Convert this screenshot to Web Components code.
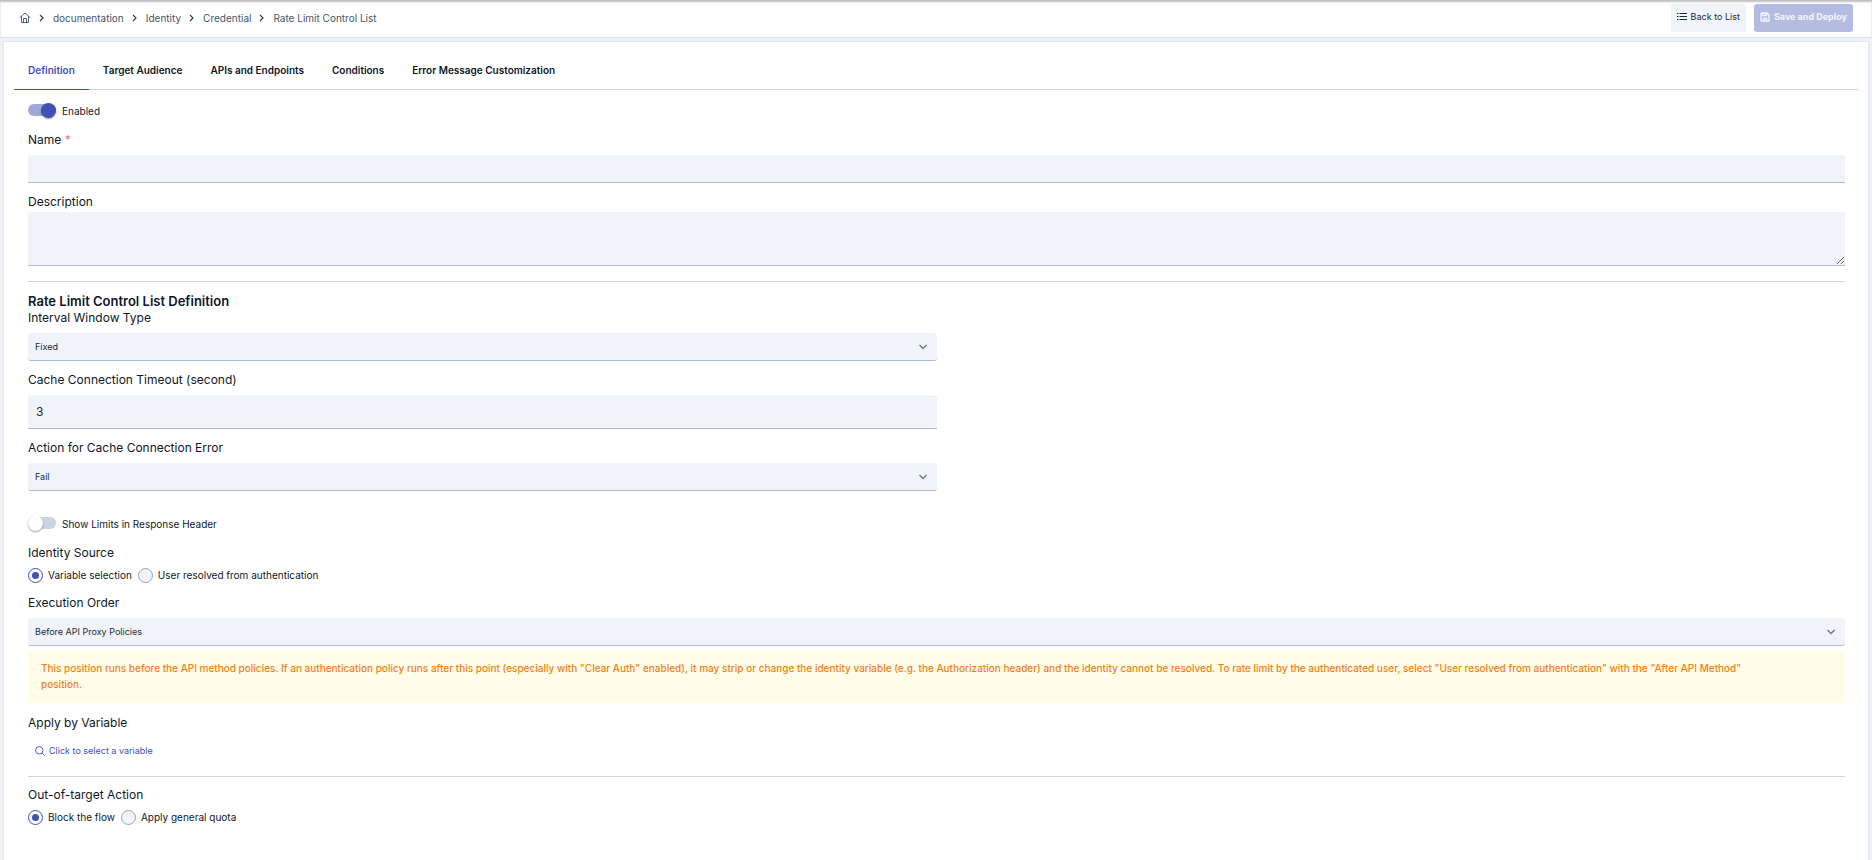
<!DOCTYPE html>
<html lang="en">
<head>
<meta charset="utf-8">
<meta name="viewport" content="width=device-width, initial-scale=1">
<title>Rate Limit Control List</title>
<style>
  :root {
    --primary: #3f51b5;
    --primary-soft: #9fa8da;
    --text: #0f172a;
    --muted: #475569;
    --field: #f0f4f9;
    --line: #cbd5e1;
    --field-line: #acbacb;
  }
  body {
    margin: 0;
    font-family: Inter, "Liberation Sans", sans-serif;
    font-size: 12px;
    line-height: 16px;
    color: var(--text);
    background: #eef1f6;
  }
</style>
</head>
<body>
<app-shell>
  <crumb-trail slot="trail" data-items="documentation|Identity|Credential|Rate Limit Control List"></crumb-trail>
  <action-button slot="actions" data-icon="list">Back to List</action-button>
  <action-button slot="actions" data-icon="save" data-variant="primary" disabled>Save and Deploy</action-button>

  <tab-bar data-items="Definition|Target Audience|APIs and Endpoints|Conditions|Error Message Customization"></tab-bar>

  <form-body>
    <toggle-switch data-label="Enabled" checked></toggle-switch>
    <text-field data-label="Name" required></text-field>
    <text-field class="area" data-label="Description" data-type="area"></text-field>
    <section-rule></section-rule>
    <section-title>Rate Limit Control List Definition</section-title>
    <select-field class="half" data-label="Interval Window Type" data-options="Fixed|Sliding"></select-field>
    <text-field class="half" data-label="Cache Connection Timeout (second)" data-type="number" data-value="3"></text-field>
    <select-field class="half last" data-label="Action for Cache Connection Error" data-options="Fail|Continue"></select-field>
    <toggle-switch data-label="Show Limits in Response Header"></toggle-switch>
    <radio-group data-label="Identity Source" data-options="Variable selection|User resolved from authentication"></radio-group>
    <select-field class="order" data-label="Execution Order" data-options="Before API Proxy Policies|After API Method"></select-field>
    <warning-note>This position runs before the API method policies. If an authentication policy runs after this point (especially with "Clear Auth" enabled), it may strip or change the identity variable (e.g. the Authorization header) and the identity cannot be resolved. To rate limit by the authenticated user, select "User resolved from authentication" with the "After API Method"<br>position.</warning-note>
    <variable-picker data-label="Apply by Variable">Click to select a variable</variable-picker>
    <section-rule></section-rule>
    <radio-group data-label="Out-of-target Action" data-options="Block the flow|Apply general quota"></radio-group>
  </form-body>
</app-shell>

<script>
const ICONS = {
  home: `<svg width="12" height="12" viewBox="0 0 24 24" fill="none" stroke="currentColor" stroke-width="1.800" stroke-linejoin="round" stroke-linecap="round"><path d="M2 11 12 2l10 9M5 9v12h14V9M9 21v-8h6v8"/></svg>`,
  right: `<svg width="6" height="8" viewBox="0 0 6 8" fill="none" stroke="currentColor" stroke-width="1.200"><path d="M1 1l3 3-3 3"/></svg>`,
  down: `<svg width="8" height="6" viewBox="0 0 8 6" fill="none" stroke="currentColor" stroke-width="1.300"><path d="M.5 1 4 4.500 7.500 1"/></svg>`,
  list: `<svg width="10" height="10" viewBox="0 0 10 10" fill="none" stroke="currentColor" stroke-width="1"><path d="M0 1.500h1.500M2.500 1.500H10M0 4.500h1.500M2.500 4.500H10M0 7.500h1.500M2.500 7.500H10"/></svg>`,
  save: `<svg width="10" height="10" viewBox="0 0 10 10" fill="none" stroke="currentColor" stroke-width="1.400" stroke-linejoin="round"><path d="M1 1.500Q1 1 1.500 1H7l2 2v5.500Q9 9 8.500 9h-7Q1 9 1 8.500zM3 1v2.500h3.500V1M3.500 9V6.500h3V9"/></svg>`,
  search: `<svg width="10" height="10" viewBox="0 0 10 10" fill="none" stroke="currentColor" stroke-width=".9"><circle cx="4.300" cy="4.300" r="3.700"/><path d="M7 7l2.600 2.600"/></svg>`,
};

class BaseElement extends HTMLElement {
  constructor() {
    super();
    this.attachShadow({ mode: "open" });
  }

  connectedCallback() {
    this.shadowRoot.innerHTML = `
      <style>
        :host { display: block; }
        *, *::before { box-sizing: border-box; }
        svg { display: block; flex: none; }
        ${this.styles()}
      </style>
      ${this.markup()}
    `;
  }

  styles() {
    return "";
  }

  markup() {
    return "<slot></slot>";
  }

  list(name) {
    return (this.dataset[name] || "").split("|");
  }
}

class AppShell extends BaseElement {
  styles() {
    return `
      :host {
        display: flex;
        flex-direction: column;
        min-height: 100vh;
      }
      header {
        display: flex;
        align-items: center;
        justify-content: space-between;
        padding: 4px 19px 5px;
        background: #fff;
        border-bottom: 1px solid #dde2e8;
        box-shadow: inset 0 2px 2px #c0c0c0;
      }
      .actions { display: flex; gap: 8px; }
      main {
        flex: 1;
        margin: 4px 4px 0;
        padding: 0 10px 32px;
        background: #fff;
        box-shadow: 0 0 2px #cbd5e1;
      }
    `;
  }

  markup() {
    return `
      <header>
        <slot name="trail"></slot>
        <div class="actions"><slot name="actions"></slot></div>
      </header>
      <main><slot></slot></main>
    `;
  }
}

class CrumbTrail extends BaseElement {
  styles() {
    return `
      ol {
        display: flex;
        align-items: center;
        margin: 0;
        padding: 0;
        list-style: none;
        font-size: 10px;
        color: var(--muted);
      }
      li { display: flex; align-items: center; }
      li > svg { margin: 0 8px; color: #334155; }
      a { color: inherit; text-decoration: none; }
    `;
  }

  markup() {
    const items = this.list("items")
      .map((item) => `<li>${ICONS.right}<a href="#">${item}</a></li>`)
      .join("");
    return `
      <nav aria-label="Breadcrumb">
        <ol><li><a href="#" aria-label="Home">${ICONS.home}</a></li>${items}</ol>
      </nav>
    `;
  }
}

class ActionButton extends BaseElement {
  styles() {
    return `
      button {
        display: flex;
        align-items: center;
        gap: 4px;
        height: 28px;
        padding: 0 6px 2px;
        border: 0;
        border-radius: 3px;
        font: 400 9px/16px Inter, sans-serif;
        color: #1e293b;
        background: var(--field);
        cursor: pointer;
      }
      button.primary {
        font-weight: 700;
        color: #f4f5fb;
        background: #b5bce2;
        cursor: default;
      }
    `;
  }

  markup() {
    return `
      <button type="button" class="${this.dataset.variant || ""}" ${this.hasAttribute("disabled") ? "disabled" : ""}>
        ${ICONS[this.dataset.icon]}<span><slot></slot></span>
      </button>
    `;
  }
}

class TabBar extends BaseElement {
  styles() {
    return `
      div { display: flex; border-bottom: 1px solid var(--line); }
      button {
        height: 48px;
        margin-bottom: -1px;
        padding: 8px 14px 0;
        border: 0;
        border-bottom: 1px solid transparent;
        font: 600 10px/16px Inter, sans-serif;
        color: var(--text);
        background: none;
        cursor: pointer;
      }
      button[aria-selected="true"] {
        color: var(--primary);
        border-color: var(--primary);
      }
    `;
  }

  markup() {
    const tabs = this.list("items")
      .map((item, i) => `<button type="button" role="tab" aria-selected="${i === 0}">${item}</button>`)
      .join("");
    return `<div role="tablist">${tabs}</div>`;
  }

  connectedCallback() {
    super.connectedCallback();
    const tabs = this.shadowRoot.querySelectorAll("button");
    tabs.forEach((tab) => {
      tab.addEventListener("click", () => {
        tabs.forEach((other) => other.setAttribute("aria-selected", other === tab));
      });
    });
  }
}

class FormBody extends BaseElement {
  styles() {
    return `
      :host { padding: 12px 13px 0 14px; }
      ::slotted(*) { margin-bottom: 11px; }
      ::slotted(.half) { width: 50%; }
      ::slotted(.area) { margin-bottom: 15px; }
      ::slotted(.last) { margin-bottom: 24px; }
      ::slotted(.order) { margin-bottom: 5px; }
      ::slotted(toggle-switch) { margin-bottom: 14px; }
      ::slotted(radio-group), ::slotted(warning-note) { margin-bottom: 12px; }
      ::slotted(section-rule) { margin-bottom: 10px; }
      ::slotted(section-title) { margin-bottom: 0; }
    `;
  }
}

class ToggleSwitch extends BaseElement {
  styles() {
    return `
      label {
        display: flex;
        align-items: center;
        gap: 6px;
        width: fit-content;
        height: 16px;
        font-size: 10px;
        cursor: pointer;
      }
      span { padding-top: 2px; }
      input {
        appearance: none;
        display: flex;
        align-items: center;
        width: 28px;
        height: 12px;
        margin: 0;
        border-radius: 6px;
        background: var(--line);
        cursor: pointer;
      }
      input::before {
        content: "";
        width: 15px;
        height: 15px;
        flex: none;
        border-radius: 50%;
        background: #fff;
        box-shadow: 0 1px 2px rgba(0, 0, 0, 0.4);
      }
      input:checked {
        justify-content: flex-end;
        background: var(--primary-soft);
      }
      input:checked::before { background: var(--primary); }
    `;
  }

  markup() {
    return `
      <label>
        <input type="checkbox" role="switch" ${this.hasAttribute("checked") ? "checked" : ""}>
        <span>${this.dataset.label}</span>
      </label>
    `;
  }
}

// Shared look of the labelled inputs
class FieldElement extends BaseElement {
  styles() {
    return `
      label { display: block; margin-bottom: 7px; }
      label.tight { margin-bottom: 2px; }
      .required { color: #f87171; }
      input, textarea, select {
        appearance: none;
        display: block;
        width: 100%;
        height: 28px;
        margin: 0;
        padding: 0 7px;
        border: 0;
        border-bottom: 1px solid var(--field-line);
        border-radius: 3px 3px 0 0;
        outline-color: var(--primary);
        font: 12px/16px Inter, sans-serif;
        color: #1e293b;
        background: var(--field);
      }
      input[inputmode] { height: 34px; padding: 0 8px; }
      textarea { height: 54px; resize: vertical; }
      select { border-radius: 3px; font-size: 9px; }
      .select { display: grid; align-items: center; }
      .select > * { grid-area: 1 / 1; }
      .select svg {
        justify-self: end;
        margin-right: 10px;
        color: #64748b;
        pointer-events: none;
      }
    `;
  }
}

class TextField extends FieldElement {
  markup() {
    const { label, type, value = "" } = this.dataset;
    const star = this.hasAttribute("required") ? ` <span class="required">*</span>` : "";
    const control =
      type === "area"
        ? `<textarea id="control"></textarea>`
        : `<input id="control" type="text" value="${value}" ${type === "number" ? 'inputmode="numeric"' : ""}>`;
    return `
      <label for="control" class="${type === "area" ? "tight" : ""}">${label}${star}</label>
      ${control}
    `;
  }
}

class SelectField extends FieldElement {
  markup() {
    const options = this.list("options").map((o) => `<option>${o}</option>`).join("");
    return `
      <label for="control">${this.dataset.label}</label>
      <div class="select"><select id="control">${options}</select>${ICONS.down}</div>
    `;
  }
}

class RadioGroup extends BaseElement {
  styles() {
    return `
      fieldset { min-width: 0; margin: 0; padding: 0; border: 0; }
      legend { padding: 0; margin-bottom: 6px; }
      div { display: flex; gap: 6px; }
      label {
        display: flex;
        align-items: center;
        gap: 5px;
        font-size: 10px;
        cursor: pointer;
      }
      input {
        appearance: none;
        display: grid;
        place-items: center;
        width: 15px;
        height: 15px;
        margin: 0;
        border: 1px solid #94a3b8;
        border-radius: 50%;
        background: var(--field);
        cursor: pointer;
      }
      input:checked { border-color: var(--primary); background: #fff; }
      input:checked::before {
        content: "";
        width: 7px;
        height: 7px;
        border-radius: 50%;
        background: var(--primary);
      }
    `;
  }

  markup() {
    const radios = this.list("options")
      .map((o, i) => `<label><input type="radio" name="choice" ${i === 0 ? "checked" : ""}>${o}</label>`)
      .join("");
    return `<fieldset><legend>${this.dataset.label}</legend><div>${radios}</div></fieldset>`;
  }
}

class WarningNote extends BaseElement {
  styles() {
    return `
      p {
        margin: 0;
        padding: 9px 13px 11px;
        border-radius: 3px;
        font-size: 10px;
        font-weight: 500;
        color: #f57f17;
        background: #fffde7;
      }
    `;
  }

  markup() {
    return `<p role="note"><slot></slot></p>`;
  }
}

class VariablePicker extends BaseElement {
  styles() {
    return `
      button {
        display: flex;
        align-items: center;
        gap: 4px;
        height: 28px;
        margin-top: 6px;
        padding: 0 7px;
        border: 0;
        font: 400 9px/16px Inter, sans-serif;
        color: var(--primary);
        background: none;
        cursor: pointer;
      }
    `;
  }

  markup() {
    return `
      <div id="title">${this.dataset.label}</div>
      <button type="button" aria-describedby="title">${ICONS.search}<span><slot></slot></span></button>
    `;
  }
}

class SectionTitle extends BaseElement {
  styles() {
    return `
      h2 { margin: 0; font-size: 13px; line-height: 18px; font-weight: 600; }
    `;
  }

  markup() {
    return `<h2><slot></slot></h2>`;
  }
}

class SectionRule extends BaseElement {
  styles() {
    return `hr { margin: 0; border: 0; border-top: 1px solid var(--line); }`;
  }

  markup() {
    return `<hr>`;
  }
}

customElements.define("app-shell", AppShell);
customElements.define("crumb-trail", CrumbTrail);
customElements.define("action-button", ActionButton);
customElements.define("tab-bar", TabBar);
customElements.define("form-body", FormBody);
customElements.define("toggle-switch", ToggleSwitch);
customElements.define("text-field", TextField);
customElements.define("select-field", SelectField);
customElements.define("radio-group", RadioGroup);
customElements.define("warning-note", WarningNote);
customElements.define("variable-picker", VariablePicker);
customElements.define("section-title", SectionTitle);
customElements.define("section-rule", SectionRule);
</script>
</body>
</html>
